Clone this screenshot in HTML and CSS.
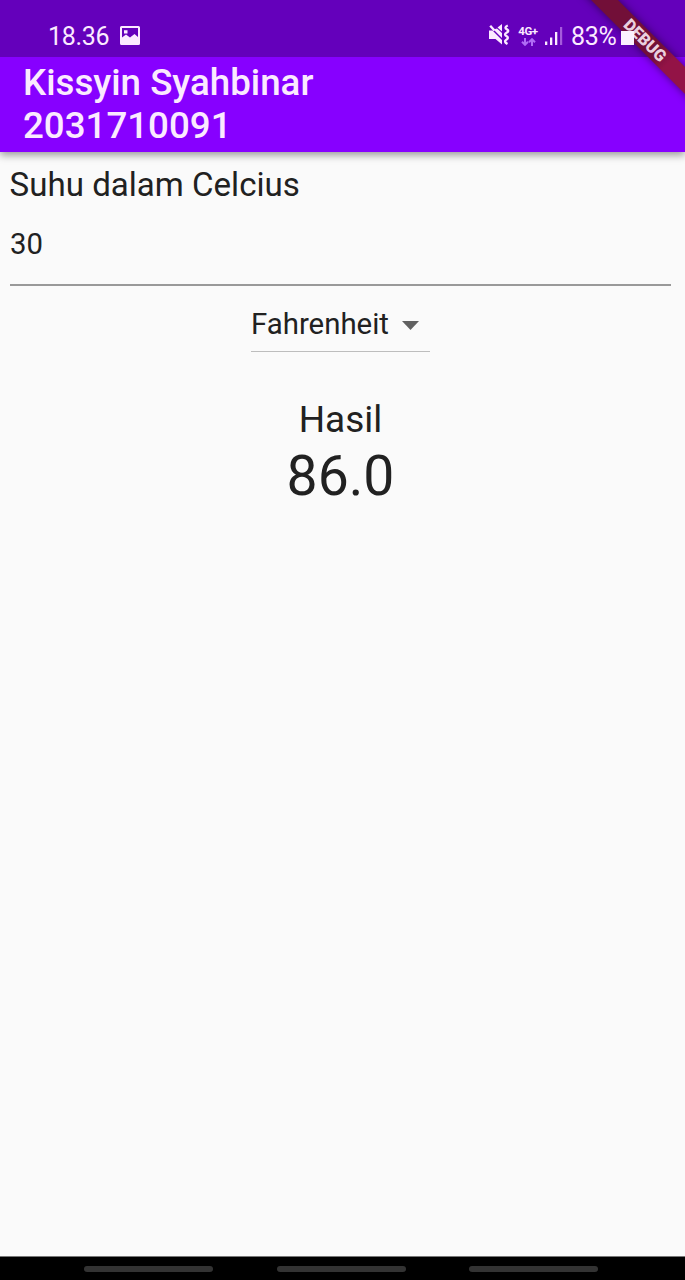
FILE: index.html
```html
<!DOCTYPE html>
<html lang="id">
<head>
<meta charset="utf-8">
<title>Konversi Suhu</title>
<link rel="stylesheet" href="styles.css">
</head>
<body>
<div class="screen">
  <header class="app-bar">
    <div class="status-bar">
      <span class="clock">18.36</span>
      <svg class="picture-icon" viewBox="0 0 20 19"><path fill-rule="evenodd" d="M1.500 0h17A1.500 1.500 0 0 1 20 1.500v16a1.500 1.500 0 0 1-1.500 1.500h-17A1.500 1.500 0 0 1 0 17.500v-16A1.500 1.500 0 0 1 1.500 0zM2 2v9.500L6 8.500l4 3 4.500-3.500 3.500 3V2zM4 4.200h3.500v3.300H4z"/></svg>
      <svg class="mute-icon" viewBox="0 0 21 22"><path d="M0 6.500h3.500L13 16v4.500L6.500 15H0zM4.500 5.500 13 14V9L8 4.500zM8.500 3.500 13 0v7.500z"/><path class="line" d="M1.200 1.800 5.500 6.500M18.800 1.500c-3.500 1.500-2.500 3-.8 3.800s1.500 2.500-.5 3.500-1.800 2.600 0 3.400 1.800 2.500-.2 3.500-1.600 2.800 1.200 4.300"/></svg>
      <span class="network"><span class="network-type">4G+</span>
        <svg class="data-arrows" viewBox="0 0 15 8"><path d="M4 0v6.500M1 3.800l3 3 3-3M11 8V1.500M8 4.200l3-3 3 3"/></svg>
      </span>
      <svg class="signal-icon" viewBox="0 0 18 20"><path d="M0 15.500h2.300V19H0zM5 11.500h2.300V19H5zM10 6h2.300v13H10z"/><path class="weak" d="M15 1h2.200v18H15z"/></svg>
      <span class="percent">83%</span>
      <span class="battery"></span>
    </div>
    <h1 class="title">Kissyin Syahbinar<br>2031710091</h1>
  </header>
  <main class="content">
    <label class="label" for="celsius">Suhu dalam Celcius</label>
    <input class="field" id="celsius" value="30">
    <div class="dropdown"><span class="unit">Fahrenheit</span><svg class="caret" viewBox="0 0 17 9"><path d="M0 0h17L8.500 9z"/></svg></div>
    <div class="result-label">Hasil</div>
    <div class="result">86.0</div>
  </main>
  <nav class="nav-bar"><i class="handle"></i><i class="handle"></i><i class="handle"></i></nav>
  <div class="debug-banner">DEBUG</div>
</div>
</body>
</html>
```
FILE: styles.css
```css
* { box-sizing: border-box; }
body { margin: 0; font-family: Roboto, sans-serif; color: #212121; }
.screen { position: relative; display: flex; flex-direction: column; width: 685px; height: 1280px; overflow: hidden; background: #fafafa; }
.app-bar { height: 152px; background: #8700ff; box-shadow: 0 3px 8px rgba(0, 0, 0, .4); color: #fbeaff; }
.status-bar { display: flex; align-items: flex-start; height: 57px; padding: 0 0 0 48px; background: #6400bb; fill: #fbeaff; }
.clock, .percent { font-size: 25px; line-height: 30px; margin-top: 22px; letter-spacing: -.3px; }
.clock { width: 72px; }
.picture-icon { width: 20px; height: 19px; margin-top: 26px; }
.mute-icon { width: 21px; height: 22px; margin: 24px 0 0 349px; }
.mute-icon .line { fill: none; stroke: #fbeaff; stroke-width: 2.4; }
.network { display: flex; flex-direction: column; align-items: center; width: 20px; margin: 25px 0 0 8px; }
.network-type { font-size: 11.5px; line-height: 12px; font-weight: 700; letter-spacing: -.4px; }
.data-arrows { width: 15px; height: 8px; margin-top: 1px; fill: none; stroke: #b06cf5; stroke-width: 2; }
.signal-icon { width: 18px; height: 20px; margin: 26px 0 0 7px; }
.signal-icon .weak { fill: #a55bdc; }
.percent { width: 50px; margin-left: 8px; }
.battery { position: relative; z-index: 2; width: 13px; height: 14px; margin-top: 31px; background: #fbf0ff; }
.title { margin: 0; padding: 4px 23px 0; font-size: 36.7px; line-height: 43px; font-weight: 500; }
.content { display: flex; flex: 1; flex-direction: column; align-items: center; padding: 13px 14px 0 10px; }
.label { align-self: stretch; margin-left: -.4px; font-size: 33.1px; line-height: 40px; }
.field { width: 100%; height: 81px; padding: 0 0 2px; border: 0; border-bottom: 2px solid #999; outline: 0; background: transparent; color: inherit; font: 29.3px Roboto, sans-serif; }
.dropdown { display: flex; align-items: center; width: 179px; height: 66px; padding-top: 11px; border-bottom: 1px solid #bdbdbd; }
.unit { width: 151px; font-size: 29.4px; line-height: 34px; }
.caret { width: 17px; height: 9px; margin-top: 2px; fill: #616161; }
.result-label { margin-top: 46px; font-size: 37px; line-height: 43px; }
.result { margin-top: 4px; font-size: 55.3px; line-height: 64px; }
.nav-bar { display: flex; justify-content: space-between; height: 24px; padding: 9px 87px 0 84px; border-top: 1px solid #777; background: #000; }
.handle { width: 129px; height: 6px; border-radius: 3px; background: #333; }
.debug-banner { position: absolute; z-index: 1; top: 31px; left: 564px; width: 162px; height: 19px; transform: rotate(45deg); background: linear-gradient(90deg, #720f38 0 60%, #931346 70%); box-shadow: 0 0 8px rgba(0, 0, 0, .5); color: #ead0df; font-size: 16.5px; line-height: 19px; font-weight: 900; text-align: center; }
```
